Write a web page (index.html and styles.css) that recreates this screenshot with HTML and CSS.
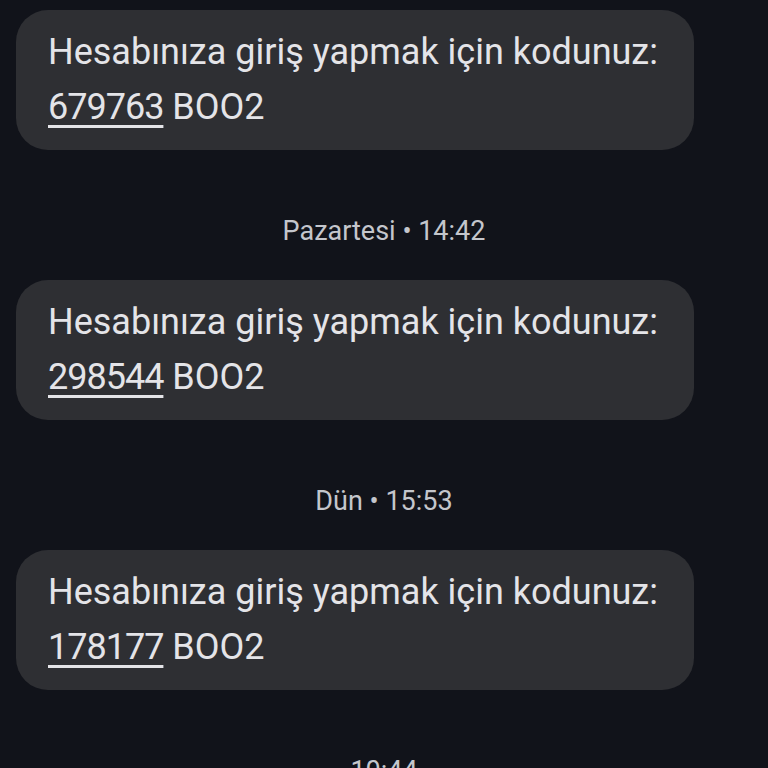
FILE: index.html
```html
<!DOCTYPE html>
<html lang="tr">
<head>
    <meta charset="UTF-8">
    <meta name="viewport" content="width=device-width, initial-scale=1.0">
    <title>Mesajlar</title>
    <link rel="stylesheet" href="styles.css">
</head>
<body>
    <div class="thread">
        <div class="bubble">
            Hesabınıza giriş yapmak için kodunuz:<br>
            <span class="code">679763</span> BOO2
        </div>

        <div class="stamp">Pazartesi • 14:42</div>
        <div class="bubble">
            Hesabınıza giriş yapmak için kodunuz:<br>
            <span class="code">298544</span> BOO2
        </div>

        <div class="stamp">Dün • 15:53</div>
        <div class="bubble">
            Hesabınıza giriş yapmak için kodunuz:<br>
            <span class="code">178177</span> BOO2
        </div>

        <div class="stamp">10:44</div>
    </div>
</body>
</html>
```

FILE: styles.css
```css
html, body {
    height: 100%;
}
body {
    font-family: Roboto, "Noto Sans", sans-serif;
    background-color: #11131a;
    color: #e4e4e8;
    margin: 0;
    padding: 0;
    overflow: hidden;
}
.thread {
    display: flex;
    flex-direction: column;
    padding-top: 10px;
}
.bubble {
    width: 678px;
    box-sizing: border-box;
    margin-left: 16px;
    padding: 15px 32px;
    background-color: #2e2f33;
    border-radius: 32px;
    font-size: 36px;
    line-height: 55px;
    white-space: nowrap;
}
.code {
    letter-spacing: -1px;
    text-decoration: underline;
    text-decoration-thickness: 3px;
    text-underline-offset: 6px;
}
.stamp {
    text-align: center;
    font-size: 27px;
    line-height: 36px;
    color: #c4c6cc;
    margin: 63px 0 31px;
}
```
